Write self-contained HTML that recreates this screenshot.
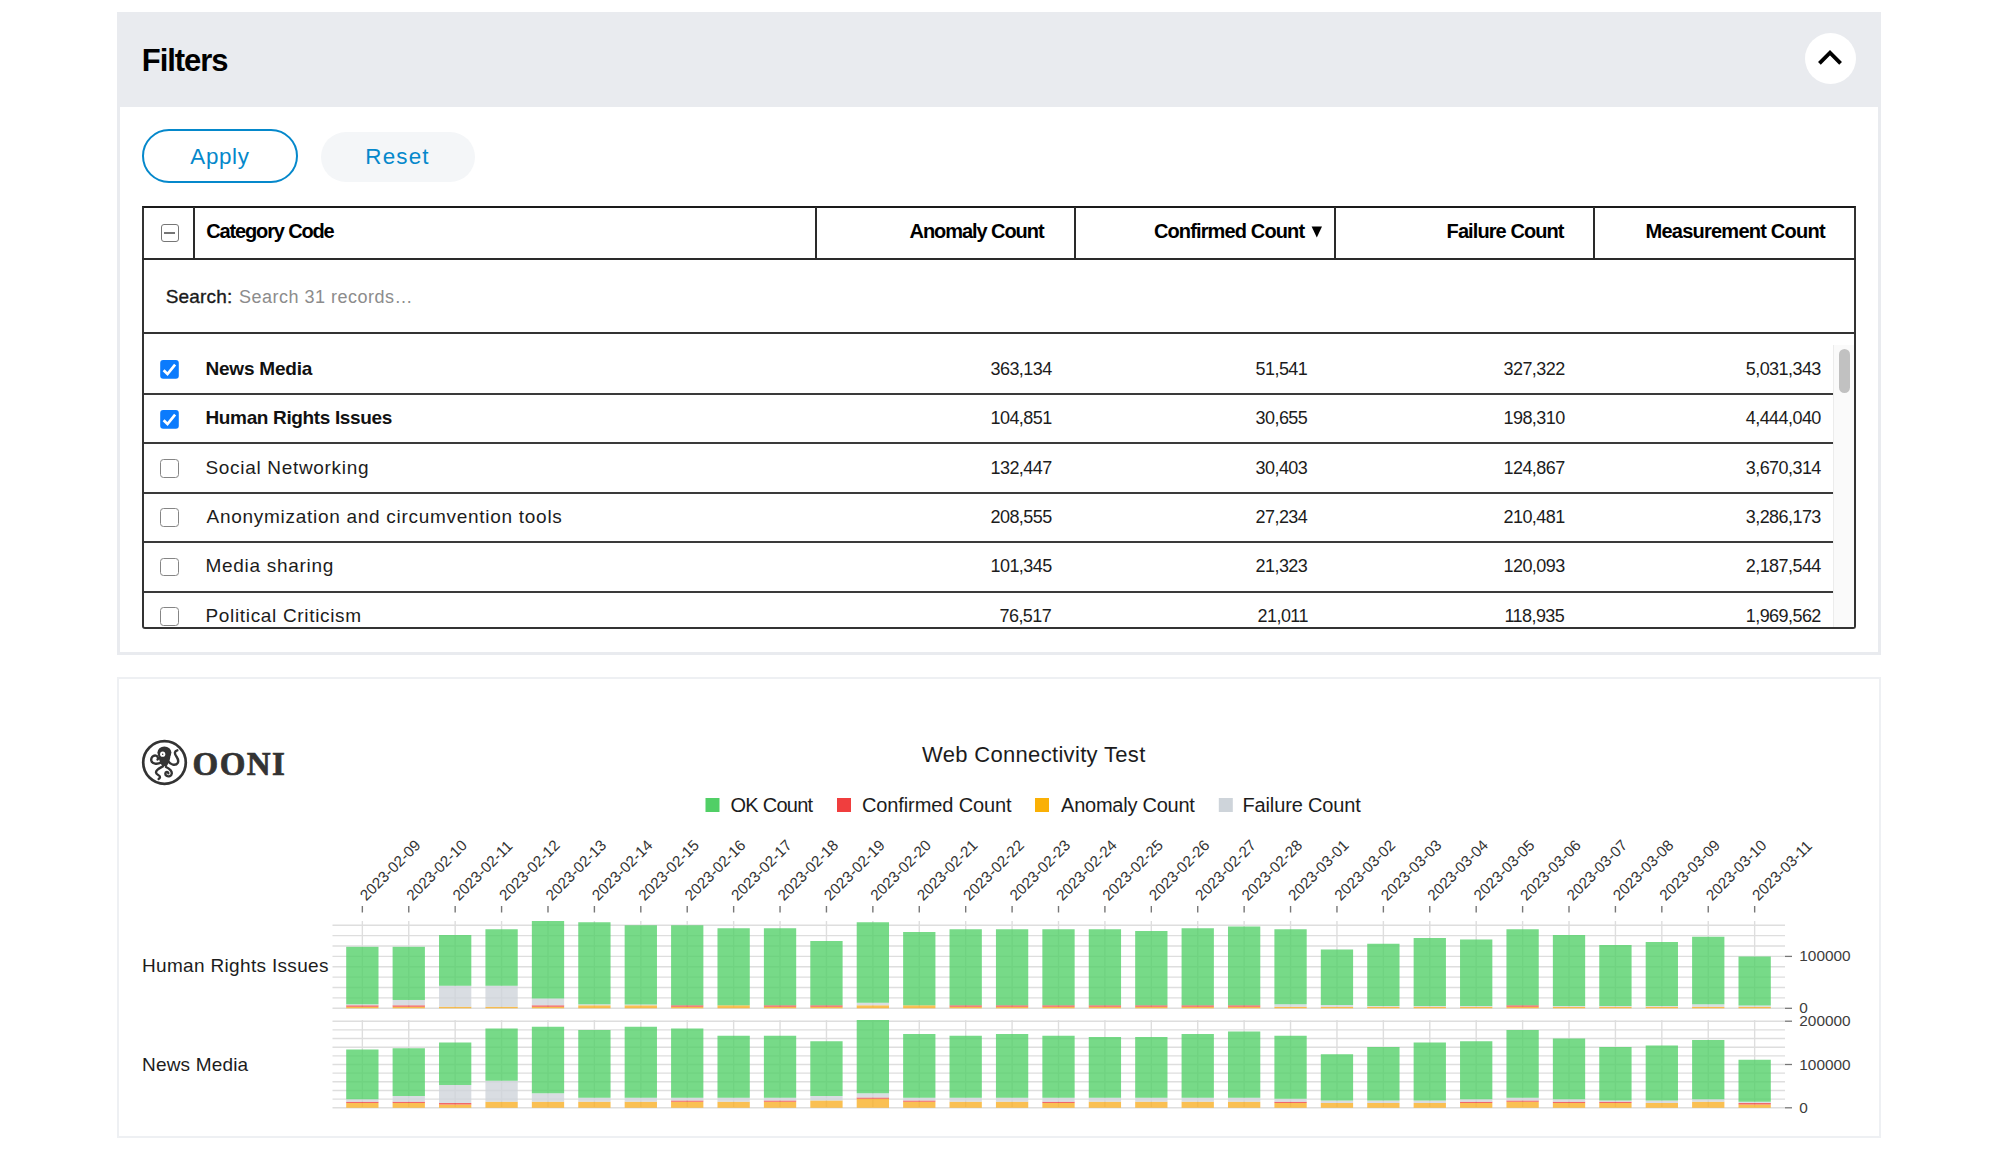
<!DOCTYPE html>
<html><head><meta charset="utf-8"><title>OONI MAT</title><style>
*{box-sizing:border-box;margin:0;padding:0}
html,body{width:1999px;height:1151px;overflow:hidden;background:#fff}
body{position:relative;font-family:"Liberation Sans",sans-serif}
.a{position:absolute}
.tx{position:absolute;white-space:pre}
</style></head><body>
<div class="a" style="left:117px;top:12px;width:1764px;height:94.7px;background:#e9ebef"></div>
<div class="a" style="left:117px;top:106.7px;width:1764px;height:548.3px;border:3px solid #e9ebef;border-top:0;background:#fff"></div>
<div class="a" style="left:1804.5px;top:32.5px;width:51px;height:51px;border-radius:50%;background:#fff"></div>
<svg class="a" style="left:1805px;top:33px" width="50" height="50" viewBox="0 0 50 50"><path d="M14.4 30.3 L25 19.7 L35.6 30.3" fill="none" stroke="#000" stroke-width="3.9" stroke-linecap="butt"/></svg>
<div class="a" style="left:142.2px;top:129.3px;width:156.3px;height:54.2px;border:2.7px solid #0588cb;border-radius:28px;background:#fff"></div>
<div class="a" style="left:320.5px;top:131.5px;width:154px;height:50px;border-radius:25px;background:#f4f6f8"></div>
<div class="a" style="left:142px;top:206.2px;width:1714px;height:423px;border:2px solid #333;border-top-color:#1a1a1a;border-radius:0 0 3px 3px"></div>
<div class="a" style="left:142px;top:257.6px;width:1714px;height:2px;background:#2a2a2a"></div>
<div class="a" style="left:142px;top:332px;width:1714px;height:2px;background:#333"></div>
<div class="a" style="left:193.2px;top:207px;width:2px;height:52px;background:#2a2a2a"></div>
<div class="a" style="left:815.2px;top:207px;width:2px;height:52px;background:#2a2a2a"></div>
<div class="a" style="left:1074.2px;top:207px;width:2px;height:52px;background:#2a2a2a"></div>
<div class="a" style="left:1333.8px;top:207px;width:2px;height:52px;background:#2a2a2a"></div>
<div class="a" style="left:1593.2px;top:207px;width:2px;height:52px;background:#2a2a2a"></div>
<div class="a" style="left:160.5px;top:223.5px;width:18px;height:18px;border:1.6px solid #767676;border-radius:3px;background:#fff"></div>
<div class="a" style="left:164px;top:231.6px;width:11px;height:2px;background:#767676"></div>
<svg class="a" style="left:1311px;top:226px" width="12" height="12" viewBox="0 0 12 12"><path d="M0.6 0.6 H11 L5.8 11.6 Z" fill="#000"/></svg>
<div class="a" style="left:144px;top:392.7px;width:1689px;height:2px;background:#3a3a3a"></div>
<div class="a" style="left:144px;top:442.2px;width:1689px;height:2px;background:#3a3a3a"></div>
<div class="a" style="left:144px;top:491.5px;width:1689px;height:2px;background:#3a3a3a"></div>
<div class="a" style="left:144px;top:541.0px;width:1689px;height:2px;background:#3a3a3a"></div>
<div class="a" style="left:144px;top:590.8px;width:1689px;height:2px;background:#3a3a3a"></div>
<div class="a" style="left:1833px;top:345px;width:21px;height:282px;background:#fafafa;border-left:1px solid #ececec"></div>
<div class="a" style="left:1839px;top:349px;width:11px;height:44px;border-radius:6px;background:#c1c1c1"></div>
<svg class="a" style="left:160.2px;top:360.20px" width="19" height="19" viewBox="0 0 19 19"><rect x="0.2" y="0" width="18.6" height="18.8" rx="3" fill="#0b7bfd"/><path d="M3.6 10.2 L7.5 14 L15.1 4.6" fill="none" stroke="#fff" stroke-width="2.7"/></svg>
<svg class="a" style="left:160.2px;top:409.60px" width="19" height="19" viewBox="0 0 19 19"><rect x="0.2" y="0" width="18.6" height="18.8" rx="3" fill="#0b7bfd"/><path d="M3.6 10.2 L7.5 14 L15.1 4.6" fill="none" stroke="#fff" stroke-width="2.7"/></svg>
<div class="a" style="left:160.3px;top:459.00px;width:18.6px;height:18.6px;border:1.8px solid #858585;border-radius:3.5px;background:#fff"></div>
<div class="a" style="left:160.3px;top:508.40px;width:18.6px;height:18.6px;border:1.8px solid #858585;border-radius:3.5px;background:#fff"></div>
<div class="a" style="left:160.3px;top:557.80px;width:18.6px;height:18.6px;border:1.8px solid #858585;border-radius:3.5px;background:#fff"></div>
<div class="a" style="left:160.3px;top:607.20px;width:18.6px;height:18.6px;border:1.8px solid #858585;border-radius:3.5px;background:#fff"></div>
<div class="a" style="left:117px;top:677px;width:1764px;height:461.3px;border:2.5px solid #eef0f3;background:#fff"></div>
<svg class="a" style="left:140px;top:738px" width="50" height="50" viewBox="0 0 50 50">
<circle cx="24.5" cy="24.5" r="21.3" fill="none" stroke="#333" stroke-width="2.7"/>
<g fill="#333">
<ellipse cx="24.4" cy="14.6" rx="7" ry="6.2"/>
<path d="M18.2 16.5 C18.6 21.5 20.5 25.5 22.3 28.3 L26.7 28.3 C28.5 25.5 30.4 21.5 30.6 16.5 Z"/>
</g>
<circle cx="22.7" cy="16.2" r="2.6" fill="#fff"/><circle cx="22.7" cy="16.2" r="0.75" fill="#333"/>
<g fill="none" stroke="#333" stroke-width="2.4" stroke-linecap="round">
<path d="M21 24.7 C17 26.5 12 26 11.3 22.5 C10.8 19.5 13 17.2 15.8 17.6 C17.8 18 18.5 20.5 17.6 21.5"/>
<path d="M28.5 23.5 C30 26.5 35.5 28.5 37.8 24.8 C39.3 22 37 19.5 35.8 17.5 C34.5 15.3 34.5 13 37.3 12.3"/>
<path d="M22.8 28.5 C20 30 16 31.5 16 34.5 C16 37 20.5 37 20 39.2 C19.8 40.2 19 40.8 18.6 41"/>
<path d="M26 29 C29 30.5 32 32.5 31.8 35.5 C31.6 38 28.5 39 26.5 37.8 C24.8 36.8 25 34.2 26.8 34 C27.8 33.9 28.4 34.6 28.3 35.2"/>
</g>
</svg>
<svg class="a" style="left:0;top:0" width="1999" height="1151" viewBox="0 0 1999 1151">
<line x1="332.5" x2="1785" y1="1008.30" y2="1008.30" stroke="#dedede" stroke-width="1.4"/>
<line x1="332.5" x2="1785" y1="997.92" y2="997.92" stroke="#dedede" stroke-width="1.4"/>
<line x1="332.5" x2="1785" y1="987.54" y2="987.54" stroke="#dedede" stroke-width="1.4"/>
<line x1="332.5" x2="1785" y1="977.16" y2="977.16" stroke="#dedede" stroke-width="1.4"/>
<line x1="332.5" x2="1785" y1="966.78" y2="966.78" stroke="#dedede" stroke-width="1.4"/>
<line x1="332.5" x2="1785" y1="956.40" y2="956.40" stroke="#dedede" stroke-width="1.4"/>
<line x1="332.5" x2="1785" y1="946.02" y2="946.02" stroke="#dedede" stroke-width="1.4"/>
<line x1="332.5" x2="1785" y1="935.64" y2="935.64" stroke="#dedede" stroke-width="1.4"/>
<line x1="332.5" x2="1785" y1="925.26" y2="925.26" stroke="#dedede" stroke-width="1.4"/>
<line x1="362.35" x2="362.35" y1="921" y2="1008.30" stroke="#dedede" stroke-width="1.4"/>
<line x1="408.76" x2="408.76" y1="921" y2="1008.30" stroke="#dedede" stroke-width="1.4"/>
<line x1="455.17" x2="455.17" y1="921" y2="1008.30" stroke="#dedede" stroke-width="1.4"/>
<line x1="501.58" x2="501.58" y1="921" y2="1008.30" stroke="#dedede" stroke-width="1.4"/>
<line x1="547.99" x2="547.99" y1="921" y2="1008.30" stroke="#dedede" stroke-width="1.4"/>
<line x1="594.40" x2="594.40" y1="921" y2="1008.30" stroke="#dedede" stroke-width="1.4"/>
<line x1="640.81" x2="640.81" y1="921" y2="1008.30" stroke="#dedede" stroke-width="1.4"/>
<line x1="687.22" x2="687.22" y1="921" y2="1008.30" stroke="#dedede" stroke-width="1.4"/>
<line x1="733.63" x2="733.63" y1="921" y2="1008.30" stroke="#dedede" stroke-width="1.4"/>
<line x1="780.04" x2="780.04" y1="921" y2="1008.30" stroke="#dedede" stroke-width="1.4"/>
<line x1="826.45" x2="826.45" y1="921" y2="1008.30" stroke="#dedede" stroke-width="1.4"/>
<line x1="872.86" x2="872.86" y1="921" y2="1008.30" stroke="#dedede" stroke-width="1.4"/>
<line x1="919.27" x2="919.27" y1="921" y2="1008.30" stroke="#dedede" stroke-width="1.4"/>
<line x1="965.68" x2="965.68" y1="921" y2="1008.30" stroke="#dedede" stroke-width="1.4"/>
<line x1="1012.09" x2="1012.09" y1="921" y2="1008.30" stroke="#dedede" stroke-width="1.4"/>
<line x1="1058.50" x2="1058.50" y1="921" y2="1008.30" stroke="#dedede" stroke-width="1.4"/>
<line x1="1104.91" x2="1104.91" y1="921" y2="1008.30" stroke="#dedede" stroke-width="1.4"/>
<line x1="1151.32" x2="1151.32" y1="921" y2="1008.30" stroke="#dedede" stroke-width="1.4"/>
<line x1="1197.73" x2="1197.73" y1="921" y2="1008.30" stroke="#dedede" stroke-width="1.4"/>
<line x1="1244.14" x2="1244.14" y1="921" y2="1008.30" stroke="#dedede" stroke-width="1.4"/>
<line x1="1290.55" x2="1290.55" y1="921" y2="1008.30" stroke="#dedede" stroke-width="1.4"/>
<line x1="1336.96" x2="1336.96" y1="921" y2="1008.30" stroke="#dedede" stroke-width="1.4"/>
<line x1="1383.37" x2="1383.37" y1="921" y2="1008.30" stroke="#dedede" stroke-width="1.4"/>
<line x1="1429.78" x2="1429.78" y1="921" y2="1008.30" stroke="#dedede" stroke-width="1.4"/>
<line x1="1476.19" x2="1476.19" y1="921" y2="1008.30" stroke="#dedede" stroke-width="1.4"/>
<line x1="1522.60" x2="1522.60" y1="921" y2="1008.30" stroke="#dedede" stroke-width="1.4"/>
<line x1="1569.01" x2="1569.01" y1="921" y2="1008.30" stroke="#dedede" stroke-width="1.4"/>
<line x1="1615.42" x2="1615.42" y1="921" y2="1008.30" stroke="#dedede" stroke-width="1.4"/>
<line x1="1661.83" x2="1661.83" y1="921" y2="1008.30" stroke="#dedede" stroke-width="1.4"/>
<line x1="1708.24" x2="1708.24" y1="921" y2="1008.30" stroke="#dedede" stroke-width="1.4"/>
<line x1="1754.65" x2="1754.65" y1="921" y2="1008.30" stroke="#dedede" stroke-width="1.4"/>
<rect x="346.20" y="1006.80" width="32.3" height="1.50" fill="#f9ae22" fill-opacity="0.78"/>
<rect x="346.20" y="1005.30" width="32.3" height="1.50" fill="#f03e3e" fill-opacity="0.78"/>
<rect x="346.20" y="1004.30" width="32.3" height="1.00" fill="#ced4da" fill-opacity="0.78"/>
<rect x="346.20" y="946.80" width="32.3" height="57.50" fill="#51cf66" fill-opacity="0.78"/>
<rect x="392.61" y="1006.80" width="32.3" height="1.50" fill="#f9ae22" fill-opacity="0.78"/>
<rect x="392.61" y="1005.30" width="32.3" height="1.50" fill="#f03e3e" fill-opacity="0.78"/>
<rect x="392.61" y="1000.00" width="32.3" height="5.30" fill="#ced4da" fill-opacity="0.78"/>
<rect x="392.61" y="946.80" width="32.3" height="53.20" fill="#51cf66" fill-opacity="0.78"/>
<rect x="439.02" y="1006.80" width="32.3" height="1.50" fill="#f9ae22" fill-opacity="0.78"/>
<rect x="439.02" y="985.75" width="32.3" height="21.05" fill="#ced4da" fill-opacity="0.78"/>
<rect x="439.02" y="935.00" width="32.3" height="50.75" fill="#51cf66" fill-opacity="0.78"/>
<rect x="485.43" y="1006.80" width="32.3" height="1.50" fill="#f9ae22" fill-opacity="0.78"/>
<rect x="485.43" y="985.75" width="32.3" height="21.05" fill="#ced4da" fill-opacity="0.78"/>
<rect x="485.43" y="929.25" width="32.3" height="56.50" fill="#51cf66" fill-opacity="0.78"/>
<rect x="531.84" y="1006.80" width="32.3" height="1.50" fill="#f9ae22" fill-opacity="0.78"/>
<rect x="531.84" y="1005.30" width="32.3" height="1.50" fill="#f03e3e" fill-opacity="0.78"/>
<rect x="531.84" y="998.50" width="32.3" height="6.80" fill="#ced4da" fill-opacity="0.78"/>
<rect x="531.84" y="921.00" width="32.3" height="77.50" fill="#51cf66" fill-opacity="0.78"/>
<rect x="578.25" y="1005.30" width="32.3" height="3.00" fill="#f9ae22" fill-opacity="0.78"/>
<rect x="578.25" y="1004.30" width="32.3" height="1.00" fill="#ced4da" fill-opacity="0.78"/>
<rect x="578.25" y="922.25" width="32.3" height="82.05" fill="#51cf66" fill-opacity="0.78"/>
<rect x="624.66" y="1005.30" width="32.3" height="3.00" fill="#f9ae22" fill-opacity="0.78"/>
<rect x="624.66" y="1004.50" width="32.3" height="0.80" fill="#ced4da" fill-opacity="0.78"/>
<rect x="624.66" y="925.25" width="32.3" height="79.25" fill="#51cf66" fill-opacity="0.78"/>
<rect x="671.07" y="1006.80" width="32.3" height="1.50" fill="#f9ae22" fill-opacity="0.78"/>
<rect x="671.07" y="1005.30" width="32.3" height="1.50" fill="#f03e3e" fill-opacity="0.78"/>
<rect x="671.07" y="925.25" width="32.3" height="80.05" fill="#51cf66" fill-opacity="0.78"/>
<rect x="717.48" y="1005.30" width="32.3" height="3.00" fill="#f9ae22" fill-opacity="0.78"/>
<rect x="717.48" y="928.25" width="32.3" height="77.05" fill="#51cf66" fill-opacity="0.78"/>
<rect x="763.89" y="1006.80" width="32.3" height="1.50" fill="#f9ae22" fill-opacity="0.78"/>
<rect x="763.89" y="1005.30" width="32.3" height="1.50" fill="#f03e3e" fill-opacity="0.78"/>
<rect x="763.89" y="928.25" width="32.3" height="77.05" fill="#51cf66" fill-opacity="0.78"/>
<rect x="810.30" y="1006.80" width="32.3" height="1.50" fill="#f9ae22" fill-opacity="0.78"/>
<rect x="810.30" y="1005.30" width="32.3" height="1.50" fill="#f03e3e" fill-opacity="0.78"/>
<rect x="810.30" y="941.00" width="32.3" height="64.30" fill="#51cf66" fill-opacity="0.78"/>
<rect x="856.71" y="1005.30" width="32.3" height="3.00" fill="#f9ae22" fill-opacity="0.78"/>
<rect x="856.71" y="1002.75" width="32.3" height="2.55" fill="#ced4da" fill-opacity="0.78"/>
<rect x="856.71" y="922.25" width="32.3" height="80.50" fill="#51cf66" fill-opacity="0.78"/>
<rect x="903.12" y="1005.30" width="32.3" height="3.00" fill="#f9ae22" fill-opacity="0.78"/>
<rect x="903.12" y="932.00" width="32.3" height="73.30" fill="#51cf66" fill-opacity="0.78"/>
<rect x="949.53" y="1006.80" width="32.3" height="1.50" fill="#f9ae22" fill-opacity="0.78"/>
<rect x="949.53" y="1005.30" width="32.3" height="1.50" fill="#f03e3e" fill-opacity="0.78"/>
<rect x="949.53" y="929.25" width="32.3" height="76.05" fill="#51cf66" fill-opacity="0.78"/>
<rect x="995.94" y="1006.80" width="32.3" height="1.50" fill="#f9ae22" fill-opacity="0.78"/>
<rect x="995.94" y="1005.30" width="32.3" height="1.50" fill="#f03e3e" fill-opacity="0.78"/>
<rect x="995.94" y="929.25" width="32.3" height="76.05" fill="#51cf66" fill-opacity="0.78"/>
<rect x="1042.35" y="1006.80" width="32.3" height="1.50" fill="#f9ae22" fill-opacity="0.78"/>
<rect x="1042.35" y="1005.30" width="32.3" height="1.50" fill="#f03e3e" fill-opacity="0.78"/>
<rect x="1042.35" y="929.25" width="32.3" height="76.05" fill="#51cf66" fill-opacity="0.78"/>
<rect x="1088.76" y="1006.80" width="32.3" height="1.50" fill="#f9ae22" fill-opacity="0.78"/>
<rect x="1088.76" y="1005.30" width="32.3" height="1.50" fill="#f03e3e" fill-opacity="0.78"/>
<rect x="1088.76" y="929.25" width="32.3" height="76.05" fill="#51cf66" fill-opacity="0.78"/>
<rect x="1135.17" y="1006.80" width="32.3" height="1.50" fill="#f9ae22" fill-opacity="0.78"/>
<rect x="1135.17" y="1005.30" width="32.3" height="1.50" fill="#f03e3e" fill-opacity="0.78"/>
<rect x="1135.17" y="931.00" width="32.3" height="74.30" fill="#51cf66" fill-opacity="0.78"/>
<rect x="1181.58" y="1006.80" width="32.3" height="1.50" fill="#f9ae22" fill-opacity="0.78"/>
<rect x="1181.58" y="1005.30" width="32.3" height="1.50" fill="#f03e3e" fill-opacity="0.78"/>
<rect x="1181.58" y="928.25" width="32.3" height="77.05" fill="#51cf66" fill-opacity="0.78"/>
<rect x="1227.99" y="1006.80" width="32.3" height="1.50" fill="#f9ae22" fill-opacity="0.78"/>
<rect x="1227.99" y="1005.30" width="32.3" height="1.50" fill="#f03e3e" fill-opacity="0.78"/>
<rect x="1227.99" y="926.50" width="32.3" height="78.80" fill="#51cf66" fill-opacity="0.78"/>
<rect x="1274.40" y="1006.80" width="32.3" height="1.50" fill="#f9ae22" fill-opacity="0.78"/>
<rect x="1274.40" y="1004.25" width="32.3" height="2.55" fill="#ced4da" fill-opacity="0.78"/>
<rect x="1274.40" y="929.25" width="32.3" height="75.00" fill="#51cf66" fill-opacity="0.78"/>
<rect x="1320.81" y="1006.80" width="32.3" height="1.50" fill="#f9ae22" fill-opacity="0.78"/>
<rect x="1320.81" y="1005.00" width="32.3" height="1.80" fill="#ced4da" fill-opacity="0.78"/>
<rect x="1320.81" y="949.50" width="32.3" height="55.50" fill="#51cf66" fill-opacity="0.78"/>
<rect x="1367.22" y="1006.80" width="32.3" height="1.50" fill="#f9ae22" fill-opacity="0.78"/>
<rect x="1367.22" y="1006.00" width="32.3" height="0.80" fill="#ced4da" fill-opacity="0.78"/>
<rect x="1367.22" y="943.75" width="32.3" height="62.25" fill="#51cf66" fill-opacity="0.78"/>
<rect x="1413.63" y="1006.80" width="32.3" height="1.50" fill="#f9ae22" fill-opacity="0.78"/>
<rect x="1413.63" y="1006.00" width="32.3" height="0.80" fill="#ced4da" fill-opacity="0.78"/>
<rect x="1413.63" y="938.00" width="32.3" height="68.00" fill="#51cf66" fill-opacity="0.78"/>
<rect x="1460.04" y="1006.80" width="32.3" height="1.50" fill="#f9ae22" fill-opacity="0.78"/>
<rect x="1460.04" y="1006.00" width="32.3" height="0.80" fill="#ced4da" fill-opacity="0.78"/>
<rect x="1460.04" y="939.50" width="32.3" height="66.50" fill="#51cf66" fill-opacity="0.78"/>
<rect x="1506.45" y="1006.80" width="32.3" height="1.50" fill="#f9ae22" fill-opacity="0.78"/>
<rect x="1506.45" y="1005.30" width="32.3" height="1.50" fill="#f03e3e" fill-opacity="0.78"/>
<rect x="1506.45" y="929.25" width="32.3" height="76.05" fill="#51cf66" fill-opacity="0.78"/>
<rect x="1552.86" y="1006.80" width="32.3" height="1.50" fill="#f9ae22" fill-opacity="0.78"/>
<rect x="1552.86" y="1006.00" width="32.3" height="0.80" fill="#ced4da" fill-opacity="0.78"/>
<rect x="1552.86" y="935.00" width="32.3" height="71.00" fill="#51cf66" fill-opacity="0.78"/>
<rect x="1599.27" y="1006.80" width="32.3" height="1.50" fill="#f9ae22" fill-opacity="0.78"/>
<rect x="1599.27" y="1006.00" width="32.3" height="0.80" fill="#ced4da" fill-opacity="0.78"/>
<rect x="1599.27" y="945.00" width="32.3" height="61.00" fill="#51cf66" fill-opacity="0.78"/>
<rect x="1645.68" y="1006.80" width="32.3" height="1.50" fill="#f9ae22" fill-opacity="0.78"/>
<rect x="1645.68" y="1006.00" width="32.3" height="0.80" fill="#ced4da" fill-opacity="0.78"/>
<rect x="1645.68" y="942.00" width="32.3" height="64.00" fill="#51cf66" fill-opacity="0.78"/>
<rect x="1692.09" y="1006.80" width="32.3" height="1.50" fill="#f9ae22" fill-opacity="0.78"/>
<rect x="1692.09" y="1004.30" width="32.3" height="2.50" fill="#ced4da" fill-opacity="0.78"/>
<rect x="1692.09" y="936.75" width="32.3" height="67.55" fill="#51cf66" fill-opacity="0.78"/>
<rect x="1738.50" y="1006.80" width="32.3" height="1.50" fill="#f9ae22" fill-opacity="0.78"/>
<rect x="1738.50" y="1005.50" width="32.3" height="1.30" fill="#ced4da" fill-opacity="0.78"/>
<rect x="1738.50" y="956.50" width="32.3" height="49.00" fill="#51cf66" fill-opacity="0.78"/>
<line x1="1785" x2="1792" y1="956.40" y2="956.40" stroke="#777" stroke-width="1.3"/>
<text x="1799.3" y="961.40" font-family="Liberation Sans" font-size="15.4" fill="#3d3d3d">100000</text>
<line x1="1785" x2="1792" y1="1008.30" y2="1008.30" stroke="#777" stroke-width="1.3"/>
<text x="1799.3" y="1013.30" font-family="Liberation Sans" font-size="15.4" fill="#3d3d3d">0</text>
<line x1="332.5" x2="1785" y1="1107.80" y2="1107.80" stroke="#dedede" stroke-width="1.4"/>
<line x1="332.5" x2="1785" y1="1099.14" y2="1099.14" stroke="#dedede" stroke-width="1.4"/>
<line x1="332.5" x2="1785" y1="1090.48" y2="1090.48" stroke="#dedede" stroke-width="1.4"/>
<line x1="332.5" x2="1785" y1="1081.82" y2="1081.82" stroke="#dedede" stroke-width="1.4"/>
<line x1="332.5" x2="1785" y1="1073.16" y2="1073.16" stroke="#dedede" stroke-width="1.4"/>
<line x1="332.5" x2="1785" y1="1064.50" y2="1064.50" stroke="#dedede" stroke-width="1.4"/>
<line x1="332.5" x2="1785" y1="1055.84" y2="1055.84" stroke="#dedede" stroke-width="1.4"/>
<line x1="332.5" x2="1785" y1="1047.18" y2="1047.18" stroke="#dedede" stroke-width="1.4"/>
<line x1="332.5" x2="1785" y1="1038.52" y2="1038.52" stroke="#dedede" stroke-width="1.4"/>
<line x1="332.5" x2="1785" y1="1029.86" y2="1029.86" stroke="#dedede" stroke-width="1.4"/>
<line x1="332.5" x2="1785" y1="1021.20" y2="1021.20" stroke="#dedede" stroke-width="1.4"/>
<line x1="362.35" x2="362.35" y1="1020" y2="1107.80" stroke="#dedede" stroke-width="1.4"/>
<line x1="408.76" x2="408.76" y1="1020" y2="1107.80" stroke="#dedede" stroke-width="1.4"/>
<line x1="455.17" x2="455.17" y1="1020" y2="1107.80" stroke="#dedede" stroke-width="1.4"/>
<line x1="501.58" x2="501.58" y1="1020" y2="1107.80" stroke="#dedede" stroke-width="1.4"/>
<line x1="547.99" x2="547.99" y1="1020" y2="1107.80" stroke="#dedede" stroke-width="1.4"/>
<line x1="594.40" x2="594.40" y1="1020" y2="1107.80" stroke="#dedede" stroke-width="1.4"/>
<line x1="640.81" x2="640.81" y1="1020" y2="1107.80" stroke="#dedede" stroke-width="1.4"/>
<line x1="687.22" x2="687.22" y1="1020" y2="1107.80" stroke="#dedede" stroke-width="1.4"/>
<line x1="733.63" x2="733.63" y1="1020" y2="1107.80" stroke="#dedede" stroke-width="1.4"/>
<line x1="780.04" x2="780.04" y1="1020" y2="1107.80" stroke="#dedede" stroke-width="1.4"/>
<line x1="826.45" x2="826.45" y1="1020" y2="1107.80" stroke="#dedede" stroke-width="1.4"/>
<line x1="872.86" x2="872.86" y1="1020" y2="1107.80" stroke="#dedede" stroke-width="1.4"/>
<line x1="919.27" x2="919.27" y1="1020" y2="1107.80" stroke="#dedede" stroke-width="1.4"/>
<line x1="965.68" x2="965.68" y1="1020" y2="1107.80" stroke="#dedede" stroke-width="1.4"/>
<line x1="1012.09" x2="1012.09" y1="1020" y2="1107.80" stroke="#dedede" stroke-width="1.4"/>
<line x1="1058.50" x2="1058.50" y1="1020" y2="1107.80" stroke="#dedede" stroke-width="1.4"/>
<line x1="1104.91" x2="1104.91" y1="1020" y2="1107.80" stroke="#dedede" stroke-width="1.4"/>
<line x1="1151.32" x2="1151.32" y1="1020" y2="1107.80" stroke="#dedede" stroke-width="1.4"/>
<line x1="1197.73" x2="1197.73" y1="1020" y2="1107.80" stroke="#dedede" stroke-width="1.4"/>
<line x1="1244.14" x2="1244.14" y1="1020" y2="1107.80" stroke="#dedede" stroke-width="1.4"/>
<line x1="1290.55" x2="1290.55" y1="1020" y2="1107.80" stroke="#dedede" stroke-width="1.4"/>
<line x1="1336.96" x2="1336.96" y1="1020" y2="1107.80" stroke="#dedede" stroke-width="1.4"/>
<line x1="1383.37" x2="1383.37" y1="1020" y2="1107.80" stroke="#dedede" stroke-width="1.4"/>
<line x1="1429.78" x2="1429.78" y1="1020" y2="1107.80" stroke="#dedede" stroke-width="1.4"/>
<line x1="1476.19" x2="1476.19" y1="1020" y2="1107.80" stroke="#dedede" stroke-width="1.4"/>
<line x1="1522.60" x2="1522.60" y1="1020" y2="1107.80" stroke="#dedede" stroke-width="1.4"/>
<line x1="1569.01" x2="1569.01" y1="1020" y2="1107.80" stroke="#dedede" stroke-width="1.4"/>
<line x1="1615.42" x2="1615.42" y1="1020" y2="1107.80" stroke="#dedede" stroke-width="1.4"/>
<line x1="1661.83" x2="1661.83" y1="1020" y2="1107.80" stroke="#dedede" stroke-width="1.4"/>
<line x1="1708.24" x2="1708.24" y1="1020" y2="1107.80" stroke="#dedede" stroke-width="1.4"/>
<line x1="1754.65" x2="1754.65" y1="1020" y2="1107.80" stroke="#dedede" stroke-width="1.4"/>
<rect x="346.20" y="1103.00" width="32.3" height="4.80" fill="#f9ae22" fill-opacity="0.78"/>
<rect x="346.20" y="1101.75" width="32.3" height="1.25" fill="#f03e3e" fill-opacity="0.78"/>
<rect x="346.20" y="1099.25" width="32.3" height="2.50" fill="#ced4da" fill-opacity="0.78"/>
<rect x="346.20" y="1049.50" width="32.3" height="49.75" fill="#51cf66" fill-opacity="0.78"/>
<rect x="392.61" y="1103.00" width="32.3" height="4.80" fill="#f9ae22" fill-opacity="0.78"/>
<rect x="392.61" y="1101.75" width="32.3" height="1.25" fill="#f03e3e" fill-opacity="0.78"/>
<rect x="392.61" y="1096.00" width="32.3" height="5.75" fill="#ced4da" fill-opacity="0.78"/>
<rect x="392.61" y="1048.25" width="32.3" height="47.75" fill="#51cf66" fill-opacity="0.78"/>
<rect x="439.02" y="1104.50" width="32.3" height="3.30" fill="#f9ae22" fill-opacity="0.78"/>
<rect x="439.02" y="1103.00" width="32.3" height="1.50" fill="#f03e3e" fill-opacity="0.78"/>
<rect x="439.02" y="1085.00" width="32.3" height="18.00" fill="#ced4da" fill-opacity="0.78"/>
<rect x="439.02" y="1042.50" width="32.3" height="42.50" fill="#51cf66" fill-opacity="0.78"/>
<rect x="485.43" y="1101.75" width="32.3" height="6.05" fill="#f9ae22" fill-opacity="0.78"/>
<rect x="485.43" y="1080.75" width="32.3" height="21.00" fill="#ced4da" fill-opacity="0.78"/>
<rect x="485.43" y="1028.50" width="32.3" height="52.25" fill="#51cf66" fill-opacity="0.78"/>
<rect x="531.84" y="1101.75" width="32.3" height="6.05" fill="#f9ae22" fill-opacity="0.78"/>
<rect x="531.84" y="1093.25" width="32.3" height="8.50" fill="#ced4da" fill-opacity="0.78"/>
<rect x="531.84" y="1026.75" width="32.3" height="66.50" fill="#51cf66" fill-opacity="0.78"/>
<rect x="578.25" y="1101.75" width="32.3" height="6.05" fill="#f9ae22" fill-opacity="0.78"/>
<rect x="578.25" y="1097.75" width="32.3" height="4.00" fill="#ced4da" fill-opacity="0.78"/>
<rect x="578.25" y="1030.00" width="32.3" height="67.75" fill="#51cf66" fill-opacity="0.78"/>
<rect x="624.66" y="1101.75" width="32.3" height="6.05" fill="#f9ae22" fill-opacity="0.78"/>
<rect x="624.66" y="1097.75" width="32.3" height="4.00" fill="#ced4da" fill-opacity="0.78"/>
<rect x="624.66" y="1026.75" width="32.3" height="71.00" fill="#51cf66" fill-opacity="0.78"/>
<rect x="671.07" y="1101.75" width="32.3" height="6.05" fill="#f9ae22" fill-opacity="0.78"/>
<rect x="671.07" y="1100.50" width="32.3" height="1.25" fill="#f03e3e" fill-opacity="0.78"/>
<rect x="671.07" y="1097.75" width="32.3" height="2.75" fill="#ced4da" fill-opacity="0.78"/>
<rect x="671.07" y="1028.50" width="32.3" height="69.25" fill="#51cf66" fill-opacity="0.78"/>
<rect x="717.48" y="1101.75" width="32.3" height="6.05" fill="#f9ae22" fill-opacity="0.78"/>
<rect x="717.48" y="1097.75" width="32.3" height="4.00" fill="#ced4da" fill-opacity="0.78"/>
<rect x="717.48" y="1035.75" width="32.3" height="62.00" fill="#51cf66" fill-opacity="0.78"/>
<rect x="763.89" y="1101.75" width="32.3" height="6.05" fill="#f9ae22" fill-opacity="0.78"/>
<rect x="763.89" y="1100.50" width="32.3" height="1.25" fill="#f03e3e" fill-opacity="0.78"/>
<rect x="763.89" y="1097.75" width="32.3" height="2.75" fill="#ced4da" fill-opacity="0.78"/>
<rect x="763.89" y="1035.75" width="32.3" height="62.00" fill="#51cf66" fill-opacity="0.78"/>
<rect x="810.30" y="1100.50" width="32.3" height="7.30" fill="#f9ae22" fill-opacity="0.78"/>
<rect x="810.30" y="1096.00" width="32.3" height="4.50" fill="#ced4da" fill-opacity="0.78"/>
<rect x="810.30" y="1041.25" width="32.3" height="54.75" fill="#51cf66" fill-opacity="0.78"/>
<rect x="856.71" y="1098.75" width="32.3" height="9.05" fill="#f9ae22" fill-opacity="0.78"/>
<rect x="856.71" y="1097.50" width="32.3" height="1.25" fill="#f03e3e" fill-opacity="0.78"/>
<rect x="856.71" y="1093.25" width="32.3" height="4.25" fill="#ced4da" fill-opacity="0.78"/>
<rect x="856.71" y="1020.00" width="32.3" height="73.25" fill="#51cf66" fill-opacity="0.78"/>
<rect x="903.12" y="1101.75" width="32.3" height="6.05" fill="#f9ae22" fill-opacity="0.78"/>
<rect x="903.12" y="1100.50" width="32.3" height="1.25" fill="#f03e3e" fill-opacity="0.78"/>
<rect x="903.12" y="1097.75" width="32.3" height="2.75" fill="#ced4da" fill-opacity="0.78"/>
<rect x="903.12" y="1034.00" width="32.3" height="63.75" fill="#51cf66" fill-opacity="0.78"/>
<rect x="949.53" y="1101.75" width="32.3" height="6.05" fill="#f9ae22" fill-opacity="0.78"/>
<rect x="949.53" y="1097.75" width="32.3" height="4.00" fill="#ced4da" fill-opacity="0.78"/>
<rect x="949.53" y="1035.75" width="32.3" height="62.00" fill="#51cf66" fill-opacity="0.78"/>
<rect x="995.94" y="1101.75" width="32.3" height="6.05" fill="#f9ae22" fill-opacity="0.78"/>
<rect x="995.94" y="1097.75" width="32.3" height="4.00" fill="#ced4da" fill-opacity="0.78"/>
<rect x="995.94" y="1034.00" width="32.3" height="63.75" fill="#51cf66" fill-opacity="0.78"/>
<rect x="1042.35" y="1103.00" width="32.3" height="4.80" fill="#f9ae22" fill-opacity="0.78"/>
<rect x="1042.35" y="1101.75" width="32.3" height="1.25" fill="#f03e3e" fill-opacity="0.78"/>
<rect x="1042.35" y="1097.75" width="32.3" height="4.00" fill="#ced4da" fill-opacity="0.78"/>
<rect x="1042.35" y="1035.75" width="32.3" height="62.00" fill="#51cf66" fill-opacity="0.78"/>
<rect x="1088.76" y="1101.75" width="32.3" height="6.05" fill="#f9ae22" fill-opacity="0.78"/>
<rect x="1088.76" y="1097.75" width="32.3" height="4.00" fill="#ced4da" fill-opacity="0.78"/>
<rect x="1088.76" y="1037.00" width="32.3" height="60.75" fill="#51cf66" fill-opacity="0.78"/>
<rect x="1135.17" y="1101.75" width="32.3" height="6.05" fill="#f9ae22" fill-opacity="0.78"/>
<rect x="1135.17" y="1097.75" width="32.3" height="4.00" fill="#ced4da" fill-opacity="0.78"/>
<rect x="1135.17" y="1037.00" width="32.3" height="60.75" fill="#51cf66" fill-opacity="0.78"/>
<rect x="1181.58" y="1101.75" width="32.3" height="6.05" fill="#f9ae22" fill-opacity="0.78"/>
<rect x="1181.58" y="1097.75" width="32.3" height="4.00" fill="#ced4da" fill-opacity="0.78"/>
<rect x="1181.58" y="1034.00" width="32.3" height="63.75" fill="#51cf66" fill-opacity="0.78"/>
<rect x="1227.99" y="1101.75" width="32.3" height="6.05" fill="#f9ae22" fill-opacity="0.78"/>
<rect x="1227.99" y="1097.75" width="32.3" height="4.00" fill="#ced4da" fill-opacity="0.78"/>
<rect x="1227.99" y="1031.50" width="32.3" height="66.25" fill="#51cf66" fill-opacity="0.78"/>
<rect x="1274.40" y="1103.00" width="32.3" height="4.80" fill="#f9ae22" fill-opacity="0.78"/>
<rect x="1274.40" y="1101.75" width="32.3" height="1.25" fill="#f03e3e" fill-opacity="0.78"/>
<rect x="1274.40" y="1098.75" width="32.3" height="3.00" fill="#ced4da" fill-opacity="0.78"/>
<rect x="1274.40" y="1035.75" width="32.3" height="63.00" fill="#51cf66" fill-opacity="0.78"/>
<rect x="1320.81" y="1103.00" width="32.3" height="4.80" fill="#f9ae22" fill-opacity="0.78"/>
<rect x="1320.81" y="1100.50" width="32.3" height="2.50" fill="#ced4da" fill-opacity="0.78"/>
<rect x="1320.81" y="1054.25" width="32.3" height="46.25" fill="#51cf66" fill-opacity="0.78"/>
<rect x="1367.22" y="1103.00" width="32.3" height="4.80" fill="#f9ae22" fill-opacity="0.78"/>
<rect x="1367.22" y="1100.50" width="32.3" height="2.50" fill="#ced4da" fill-opacity="0.78"/>
<rect x="1367.22" y="1047.00" width="32.3" height="53.50" fill="#51cf66" fill-opacity="0.78"/>
<rect x="1413.63" y="1103.00" width="32.3" height="4.80" fill="#f9ae22" fill-opacity="0.78"/>
<rect x="1413.63" y="1100.50" width="32.3" height="2.50" fill="#ced4da" fill-opacity="0.78"/>
<rect x="1413.63" y="1042.50" width="32.3" height="58.00" fill="#51cf66" fill-opacity="0.78"/>
<rect x="1460.04" y="1103.00" width="32.3" height="4.80" fill="#f9ae22" fill-opacity="0.78"/>
<rect x="1460.04" y="1101.75" width="32.3" height="1.25" fill="#f03e3e" fill-opacity="0.78"/>
<rect x="1460.04" y="1099.25" width="32.3" height="2.50" fill="#ced4da" fill-opacity="0.78"/>
<rect x="1460.04" y="1041.25" width="32.3" height="58.00" fill="#51cf66" fill-opacity="0.78"/>
<rect x="1506.45" y="1101.75" width="32.3" height="6.05" fill="#f9ae22" fill-opacity="0.78"/>
<rect x="1506.45" y="1100.50" width="32.3" height="1.25" fill="#f03e3e" fill-opacity="0.78"/>
<rect x="1506.45" y="1097.75" width="32.3" height="2.75" fill="#ced4da" fill-opacity="0.78"/>
<rect x="1506.45" y="1030.00" width="32.3" height="67.75" fill="#51cf66" fill-opacity="0.78"/>
<rect x="1552.86" y="1103.00" width="32.3" height="4.80" fill="#f9ae22" fill-opacity="0.78"/>
<rect x="1552.86" y="1101.75" width="32.3" height="1.25" fill="#f03e3e" fill-opacity="0.78"/>
<rect x="1552.86" y="1099.25" width="32.3" height="2.50" fill="#ced4da" fill-opacity="0.78"/>
<rect x="1552.86" y="1038.50" width="32.3" height="60.75" fill="#51cf66" fill-opacity="0.78"/>
<rect x="1599.27" y="1103.00" width="32.3" height="4.80" fill="#f9ae22" fill-opacity="0.78"/>
<rect x="1599.27" y="1101.75" width="32.3" height="1.25" fill="#f03e3e" fill-opacity="0.78"/>
<rect x="1599.27" y="1100.50" width="32.3" height="1.25" fill="#ced4da" fill-opacity="0.78"/>
<rect x="1599.27" y="1047.00" width="32.3" height="53.50" fill="#51cf66" fill-opacity="0.78"/>
<rect x="1645.68" y="1103.00" width="32.3" height="4.80" fill="#f9ae22" fill-opacity="0.78"/>
<rect x="1645.68" y="1100.50" width="32.3" height="2.50" fill="#ced4da" fill-opacity="0.78"/>
<rect x="1645.68" y="1045.50" width="32.3" height="55.00" fill="#51cf66" fill-opacity="0.78"/>
<rect x="1692.09" y="1101.75" width="32.3" height="6.05" fill="#f9ae22" fill-opacity="0.78"/>
<rect x="1692.09" y="1099.25" width="32.3" height="2.50" fill="#ced4da" fill-opacity="0.78"/>
<rect x="1692.09" y="1040.00" width="32.3" height="59.25" fill="#51cf66" fill-opacity="0.78"/>
<rect x="1738.50" y="1104.50" width="32.3" height="3.30" fill="#f9ae22" fill-opacity="0.78"/>
<rect x="1738.50" y="1103.00" width="32.3" height="1.50" fill="#f03e3e" fill-opacity="0.78"/>
<rect x="1738.50" y="1101.75" width="32.3" height="1.25" fill="#ced4da" fill-opacity="0.78"/>
<rect x="1738.50" y="1059.75" width="32.3" height="42.00" fill="#51cf66" fill-opacity="0.78"/>
<line x1="1785" x2="1792" y1="1021.20" y2="1021.20" stroke="#777" stroke-width="1.3"/>
<text x="1799.3" y="1026.20" font-family="Liberation Sans" font-size="15.4" fill="#3d3d3d">200000</text>
<line x1="1785" x2="1792" y1="1064.50" y2="1064.50" stroke="#777" stroke-width="1.3"/>
<text x="1799.3" y="1069.50" font-family="Liberation Sans" font-size="15.4" fill="#3d3d3d">100000</text>
<line x1="1785" x2="1792" y1="1107.80" y2="1107.80" stroke="#777" stroke-width="1.3"/>
<text x="1799.3" y="1112.80" font-family="Liberation Sans" font-size="15.4" fill="#3d3d3d">0</text>
<line x1="362.35" x2="362.35" y1="906" y2="912.5" stroke="#777" stroke-width="1.4"/>
<text transform="translate(362.35,897.6) rotate(-45)" font-family="Liberation Sans" font-size="15.3" fill="#333" dominant-baseline="central">2023-02-09</text>
<line x1="408.76" x2="408.76" y1="906" y2="912.5" stroke="#777" stroke-width="1.4"/>
<text transform="translate(408.76,897.6) rotate(-45)" font-family="Liberation Sans" font-size="15.3" fill="#333" dominant-baseline="central">2023-02-10</text>
<line x1="455.17" x2="455.17" y1="906" y2="912.5" stroke="#777" stroke-width="1.4"/>
<text transform="translate(455.17,897.6) rotate(-45)" font-family="Liberation Sans" font-size="15.3" fill="#333" dominant-baseline="central">2023-02-11</text>
<line x1="501.58" x2="501.58" y1="906" y2="912.5" stroke="#777" stroke-width="1.4"/>
<text transform="translate(501.58,897.6) rotate(-45)" font-family="Liberation Sans" font-size="15.3" fill="#333" dominant-baseline="central">2023-02-12</text>
<line x1="547.99" x2="547.99" y1="906" y2="912.5" stroke="#777" stroke-width="1.4"/>
<text transform="translate(547.99,897.6) rotate(-45)" font-family="Liberation Sans" font-size="15.3" fill="#333" dominant-baseline="central">2023-02-13</text>
<line x1="594.40" x2="594.40" y1="906" y2="912.5" stroke="#777" stroke-width="1.4"/>
<text transform="translate(594.40,897.6) rotate(-45)" font-family="Liberation Sans" font-size="15.3" fill="#333" dominant-baseline="central">2023-02-14</text>
<line x1="640.81" x2="640.81" y1="906" y2="912.5" stroke="#777" stroke-width="1.4"/>
<text transform="translate(640.81,897.6) rotate(-45)" font-family="Liberation Sans" font-size="15.3" fill="#333" dominant-baseline="central">2023-02-15</text>
<line x1="687.22" x2="687.22" y1="906" y2="912.5" stroke="#777" stroke-width="1.4"/>
<text transform="translate(687.22,897.6) rotate(-45)" font-family="Liberation Sans" font-size="15.3" fill="#333" dominant-baseline="central">2023-02-16</text>
<line x1="733.63" x2="733.63" y1="906" y2="912.5" stroke="#777" stroke-width="1.4"/>
<text transform="translate(733.63,897.6) rotate(-45)" font-family="Liberation Sans" font-size="15.3" fill="#333" dominant-baseline="central">2023-02-17</text>
<line x1="780.04" x2="780.04" y1="906" y2="912.5" stroke="#777" stroke-width="1.4"/>
<text transform="translate(780.04,897.6) rotate(-45)" font-family="Liberation Sans" font-size="15.3" fill="#333" dominant-baseline="central">2023-02-18</text>
<line x1="826.45" x2="826.45" y1="906" y2="912.5" stroke="#777" stroke-width="1.4"/>
<text transform="translate(826.45,897.6) rotate(-45)" font-family="Liberation Sans" font-size="15.3" fill="#333" dominant-baseline="central">2023-02-19</text>
<line x1="872.86" x2="872.86" y1="906" y2="912.5" stroke="#777" stroke-width="1.4"/>
<text transform="translate(872.86,897.6) rotate(-45)" font-family="Liberation Sans" font-size="15.3" fill="#333" dominant-baseline="central">2023-02-20</text>
<line x1="919.27" x2="919.27" y1="906" y2="912.5" stroke="#777" stroke-width="1.4"/>
<text transform="translate(919.27,897.6) rotate(-45)" font-family="Liberation Sans" font-size="15.3" fill="#333" dominant-baseline="central">2023-02-21</text>
<line x1="965.68" x2="965.68" y1="906" y2="912.5" stroke="#777" stroke-width="1.4"/>
<text transform="translate(965.68,897.6) rotate(-45)" font-family="Liberation Sans" font-size="15.3" fill="#333" dominant-baseline="central">2023-02-22</text>
<line x1="1012.09" x2="1012.09" y1="906" y2="912.5" stroke="#777" stroke-width="1.4"/>
<text transform="translate(1012.09,897.6) rotate(-45)" font-family="Liberation Sans" font-size="15.3" fill="#333" dominant-baseline="central">2023-02-23</text>
<line x1="1058.50" x2="1058.50" y1="906" y2="912.5" stroke="#777" stroke-width="1.4"/>
<text transform="translate(1058.50,897.6) rotate(-45)" font-family="Liberation Sans" font-size="15.3" fill="#333" dominant-baseline="central">2023-02-24</text>
<line x1="1104.91" x2="1104.91" y1="906" y2="912.5" stroke="#777" stroke-width="1.4"/>
<text transform="translate(1104.91,897.6) rotate(-45)" font-family="Liberation Sans" font-size="15.3" fill="#333" dominant-baseline="central">2023-02-25</text>
<line x1="1151.32" x2="1151.32" y1="906" y2="912.5" stroke="#777" stroke-width="1.4"/>
<text transform="translate(1151.32,897.6) rotate(-45)" font-family="Liberation Sans" font-size="15.3" fill="#333" dominant-baseline="central">2023-02-26</text>
<line x1="1197.73" x2="1197.73" y1="906" y2="912.5" stroke="#777" stroke-width="1.4"/>
<text transform="translate(1197.73,897.6) rotate(-45)" font-family="Liberation Sans" font-size="15.3" fill="#333" dominant-baseline="central">2023-02-27</text>
<line x1="1244.14" x2="1244.14" y1="906" y2="912.5" stroke="#777" stroke-width="1.4"/>
<text transform="translate(1244.14,897.6) rotate(-45)" font-family="Liberation Sans" font-size="15.3" fill="#333" dominant-baseline="central">2023-02-28</text>
<line x1="1290.55" x2="1290.55" y1="906" y2="912.5" stroke="#777" stroke-width="1.4"/>
<text transform="translate(1290.55,897.6) rotate(-45)" font-family="Liberation Sans" font-size="15.3" fill="#333" dominant-baseline="central">2023-03-01</text>
<line x1="1336.96" x2="1336.96" y1="906" y2="912.5" stroke="#777" stroke-width="1.4"/>
<text transform="translate(1336.96,897.6) rotate(-45)" font-family="Liberation Sans" font-size="15.3" fill="#333" dominant-baseline="central">2023-03-02</text>
<line x1="1383.37" x2="1383.37" y1="906" y2="912.5" stroke="#777" stroke-width="1.4"/>
<text transform="translate(1383.37,897.6) rotate(-45)" font-family="Liberation Sans" font-size="15.3" fill="#333" dominant-baseline="central">2023-03-03</text>
<line x1="1429.78" x2="1429.78" y1="906" y2="912.5" stroke="#777" stroke-width="1.4"/>
<text transform="translate(1429.78,897.6) rotate(-45)" font-family="Liberation Sans" font-size="15.3" fill="#333" dominant-baseline="central">2023-03-04</text>
<line x1="1476.19" x2="1476.19" y1="906" y2="912.5" stroke="#777" stroke-width="1.4"/>
<text transform="translate(1476.19,897.6) rotate(-45)" font-family="Liberation Sans" font-size="15.3" fill="#333" dominant-baseline="central">2023-03-05</text>
<line x1="1522.60" x2="1522.60" y1="906" y2="912.5" stroke="#777" stroke-width="1.4"/>
<text transform="translate(1522.60,897.6) rotate(-45)" font-family="Liberation Sans" font-size="15.3" fill="#333" dominant-baseline="central">2023-03-06</text>
<line x1="1569.01" x2="1569.01" y1="906" y2="912.5" stroke="#777" stroke-width="1.4"/>
<text transform="translate(1569.01,897.6) rotate(-45)" font-family="Liberation Sans" font-size="15.3" fill="#333" dominant-baseline="central">2023-03-07</text>
<line x1="1615.42" x2="1615.42" y1="906" y2="912.5" stroke="#777" stroke-width="1.4"/>
<text transform="translate(1615.42,897.6) rotate(-45)" font-family="Liberation Sans" font-size="15.3" fill="#333" dominant-baseline="central">2023-03-08</text>
<line x1="1661.83" x2="1661.83" y1="906" y2="912.5" stroke="#777" stroke-width="1.4"/>
<text transform="translate(1661.83,897.6) rotate(-45)" font-family="Liberation Sans" font-size="15.3" fill="#333" dominant-baseline="central">2023-03-09</text>
<line x1="1708.24" x2="1708.24" y1="906" y2="912.5" stroke="#777" stroke-width="1.4"/>
<text transform="translate(1708.24,897.6) rotate(-45)" font-family="Liberation Sans" font-size="15.3" fill="#333" dominant-baseline="central">2023-03-10</text>
<line x1="1754.65" x2="1754.65" y1="906" y2="912.5" stroke="#777" stroke-width="1.4"/>
<text transform="translate(1754.65,897.6) rotate(-45)" font-family="Liberation Sans" font-size="15.3" fill="#333" dominant-baseline="central">2023-03-11</text>
<rect x="705.5" y="798" width="14" height="14" fill="#51cf66"/>
<rect x="837.0" y="798" width="14" height="14" fill="#f03e3e"/>
<rect x="1035.0" y="798" width="14" height="14" fill="#fab005"/>
<rect x="1218.8" y="798" width="14" height="14" fill="#ced4da"/>
</svg>
<div class="tx" style="left:141.80px;top:45.00px;font-family:&quot;Liberation Sans&quot;;font-weight:700;font-size:31px;line-height:31px;letter-spacing:-1.050px;color:#000">Filters</div>
<div class="tx" style="left:190.30px;top:145.80px;font-family:&quot;Liberation Sans&quot;;font-weight:400;font-size:22.4px;line-height:22.4px;letter-spacing:0.650px;color:#0588cb">Apply</div>
<div class="tx" style="left:365.30px;top:145.80px;font-family:&quot;Liberation Sans&quot;;font-weight:400;font-size:22.4px;line-height:22.4px;letter-spacing:1.175px;color:#0588cb">Reset</div>
<div class="tx" style="left:206.30px;top:220.70px;font-family:&quot;Liberation Sans&quot;;font-weight:700;font-size:20px;line-height:20px;letter-spacing:-1.150px;color:#000">Category Code</div>
<div class="tx" style="left:909.60px;top:220.70px;font-family:&quot;Liberation Sans&quot;;font-weight:700;font-size:20px;line-height:20px;letter-spacing:-1.067px;color:#000">Anomaly Count</div>
<div class="tx" style="left:1153.90px;top:220.70px;font-family:&quot;Liberation Sans&quot;;font-weight:700;font-size:20px;line-height:20px;letter-spacing:-0.864px;color:#000">Confirmed Count</div>
<div class="tx" style="left:1446.60px;top:220.70px;font-family:&quot;Liberation Sans&quot;;font-weight:700;font-size:20px;line-height:20px;letter-spacing:-0.917px;color:#000">Failure Count</div>
<div class="tx" style="left:1645.60px;top:220.70px;font-family:&quot;Liberation Sans&quot;;font-weight:700;font-size:20px;line-height:20px;letter-spacing:-0.769px;color:#000">Measurement Count</div>
<div class="tx" style="left:165.70px;top:287.30px;font-family:&quot;Liberation Sans&quot;;font-weight:400;font-size:19px;line-height:19px;letter-spacing:0.183px;color:#1a1a1a;-webkit-text-stroke:0.35px #1a1a1a">Search:</div>
<div class="tx" style="left:239.00px;top:288.40px;font-family:&quot;Liberation Sans&quot;;font-weight:400;font-size:18px;line-height:18px;letter-spacing:0.500px;color:#8c8c8c">Search 31 records…</div>
<div class="tx" style="left:205.50px;top:358.80px;font-family:&quot;Liberation Sans&quot;;font-weight:700;font-size:19px;line-height:19px;letter-spacing:-0.211px;color:#111">News Media</div>
<div class="tx" style="left:990.50px;top:359.80px;font-family:&quot;Liberation Sans&quot;;font-weight:400;font-size:18px;line-height:18px;letter-spacing:-0.567px;color:#1c1c1c">363,134</div>
<div class="tx" style="left:1255.60px;top:359.80px;font-family:&quot;Liberation Sans&quot;;font-weight:400;font-size:18px;line-height:18px;letter-spacing:-0.567px;color:#1c1c1c">51,541</div>
<div class="tx" style="left:1503.50px;top:359.80px;font-family:&quot;Liberation Sans&quot;;font-weight:400;font-size:18px;line-height:18px;letter-spacing:-0.567px;color:#1c1c1c">327,322</div>
<div class="tx" style="left:1745.80px;top:359.80px;font-family:&quot;Liberation Sans&quot;;font-weight:400;font-size:18px;line-height:18px;letter-spacing:-0.567px;color:#1c1c1c">5,031,343</div>
<div class="tx" style="left:205.50px;top:408.20px;font-family:&quot;Liberation Sans&quot;;font-weight:700;font-size:19px;line-height:19px;letter-spacing:-0.356px;color:#111">Human Rights Issues</div>
<div class="tx" style="left:990.50px;top:409.20px;font-family:&quot;Liberation Sans&quot;;font-weight:400;font-size:18px;line-height:18px;letter-spacing:-0.567px;color:#1c1c1c">104,851</div>
<div class="tx" style="left:1255.60px;top:409.20px;font-family:&quot;Liberation Sans&quot;;font-weight:400;font-size:18px;line-height:18px;letter-spacing:-0.567px;color:#1c1c1c">30,655</div>
<div class="tx" style="left:1503.50px;top:409.20px;font-family:&quot;Liberation Sans&quot;;font-weight:400;font-size:18px;line-height:18px;letter-spacing:-0.567px;color:#1c1c1c">198,310</div>
<div class="tx" style="left:1745.80px;top:409.20px;font-family:&quot;Liberation Sans&quot;;font-weight:400;font-size:18px;line-height:18px;letter-spacing:-0.567px;color:#1c1c1c">4,444,040</div>
<div class="tx" style="left:205.50px;top:457.60px;font-family:&quot;Liberation Sans&quot;;font-weight:400;font-size:19px;line-height:19px;letter-spacing:0.681px;color:#1c1c1c">Social Networking</div>
<div class="tx" style="left:990.50px;top:458.60px;font-family:&quot;Liberation Sans&quot;;font-weight:400;font-size:18px;line-height:18px;letter-spacing:-0.567px;color:#1c1c1c">132,447</div>
<div class="tx" style="left:1255.60px;top:458.60px;font-family:&quot;Liberation Sans&quot;;font-weight:400;font-size:18px;line-height:18px;letter-spacing:-0.567px;color:#1c1c1c">30,403</div>
<div class="tx" style="left:1503.50px;top:458.60px;font-family:&quot;Liberation Sans&quot;;font-weight:400;font-size:18px;line-height:18px;letter-spacing:-0.567px;color:#1c1c1c">124,867</div>
<div class="tx" style="left:1745.80px;top:458.60px;font-family:&quot;Liberation Sans&quot;;font-weight:400;font-size:18px;line-height:18px;letter-spacing:-0.567px;color:#1c1c1c">3,670,314</div>
<div class="tx" style="left:206.50px;top:507.00px;font-family:&quot;Liberation Sans&quot;;font-weight:400;font-size:19px;line-height:19px;letter-spacing:0.717px;color:#1c1c1c">Anonymization and circumvention tools</div>
<div class="tx" style="left:990.50px;top:508.00px;font-family:&quot;Liberation Sans&quot;;font-weight:400;font-size:18px;line-height:18px;letter-spacing:-0.567px;color:#1c1c1c">208,555</div>
<div class="tx" style="left:1255.60px;top:508.00px;font-family:&quot;Liberation Sans&quot;;font-weight:400;font-size:18px;line-height:18px;letter-spacing:-0.567px;color:#1c1c1c">27,234</div>
<div class="tx" style="left:1503.50px;top:508.00px;font-family:&quot;Liberation Sans&quot;;font-weight:400;font-size:18px;line-height:18px;letter-spacing:-0.567px;color:#1c1c1c">210,481</div>
<div class="tx" style="left:1745.80px;top:508.00px;font-family:&quot;Liberation Sans&quot;;font-weight:400;font-size:18px;line-height:18px;letter-spacing:-0.567px;color:#1c1c1c">3,286,173</div>
<div class="tx" style="left:205.50px;top:556.40px;font-family:&quot;Liberation Sans&quot;;font-weight:400;font-size:19px;line-height:19px;letter-spacing:0.708px;color:#1c1c1c">Media sharing</div>
<div class="tx" style="left:990.50px;top:557.40px;font-family:&quot;Liberation Sans&quot;;font-weight:400;font-size:18px;line-height:18px;letter-spacing:-0.567px;color:#1c1c1c">101,345</div>
<div class="tx" style="left:1255.60px;top:557.40px;font-family:&quot;Liberation Sans&quot;;font-weight:400;font-size:18px;line-height:18px;letter-spacing:-0.567px;color:#1c1c1c">21,323</div>
<div class="tx" style="left:1503.50px;top:557.40px;font-family:&quot;Liberation Sans&quot;;font-weight:400;font-size:18px;line-height:18px;letter-spacing:-0.567px;color:#1c1c1c">120,093</div>
<div class="tx" style="left:1745.80px;top:557.40px;font-family:&quot;Liberation Sans&quot;;font-weight:400;font-size:18px;line-height:18px;letter-spacing:-0.567px;color:#1c1c1c">2,187,544</div>
<div class="tx" style="left:205.50px;top:605.80px;font-family:&quot;Liberation Sans&quot;;font-weight:400;font-size:19px;line-height:19px;letter-spacing:0.667px;color:#1c1c1c">Political Criticism</div>
<div class="tx" style="left:999.50px;top:606.80px;font-family:&quot;Liberation Sans&quot;;font-weight:400;font-size:18px;line-height:18px;letter-spacing:-0.567px;color:#1c1c1c">76,517</div>
<div class="tx" style="left:1257.60px;top:606.80px;font-family:&quot;Liberation Sans&quot;;font-weight:400;font-size:18px;line-height:18px;letter-spacing:-0.567px;color:#1c1c1c">21,011</div>
<div class="tx" style="left:1504.50px;top:606.80px;font-family:&quot;Liberation Sans&quot;;font-weight:400;font-size:18px;line-height:18px;letter-spacing:-0.567px;color:#1c1c1c">118,935</div>
<div class="tx" style="left:1745.80px;top:606.80px;font-family:&quot;Liberation Sans&quot;;font-weight:400;font-size:18px;line-height:18px;letter-spacing:-0.567px;color:#1c1c1c">1,969,562</div>
<div class="tx" style="left:192.60px;top:748.30px;font-family:&quot;Liberation Serif&quot;;font-weight:700;font-size:33px;line-height:33px;letter-spacing:1.433px;color:#333;-webkit-text-stroke:0.7px #333">OONI</div>
<div class="tx" style="left:922.00px;top:744.10px;font-family:&quot;Liberation Sans&quot;;font-weight:400;font-size:22px;line-height:22px;letter-spacing:0.320px;color:#1c1c1c">Web Connectivity Test</div>
<div class="tx" style="left:730.50px;top:795.00px;font-family:&quot;Liberation Sans&quot;;font-weight:400;font-size:20px;line-height:20px;letter-spacing:-0.743px;color:#1c1c1c">OK Count</div>
<div class="tx" style="left:862.00px;top:795.00px;font-family:&quot;Liberation Sans&quot;;font-weight:400;font-size:20px;line-height:20px;letter-spacing:-0.114px;color:#1c1c1c">Confirmed Count</div>
<div class="tx" style="left:1061.10px;top:795.00px;font-family:&quot;Liberation Sans&quot;;font-weight:400;font-size:20px;line-height:20px;letter-spacing:-0.250px;color:#1c1c1c">Anomaly Count</div>
<div class="tx" style="left:1242.50px;top:795.00px;font-family:&quot;Liberation Sans&quot;;font-weight:400;font-size:20px;line-height:20px;letter-spacing:-0.142px;color:#1c1c1c">Failure Count</div>
<div class="tx" style="left:142.00px;top:955.90px;font-family:&quot;Liberation Sans&quot;;font-weight:400;font-size:19px;line-height:19px;letter-spacing:0.328px;color:#1c1c1c">Human Rights Issues</div>
<div class="tx" style="left:142.00px;top:1054.80px;font-family:&quot;Liberation Sans&quot;;font-weight:400;font-size:19px;line-height:19px;letter-spacing:0.178px;color:#1c1c1c">News Media</div>
</body></html>
